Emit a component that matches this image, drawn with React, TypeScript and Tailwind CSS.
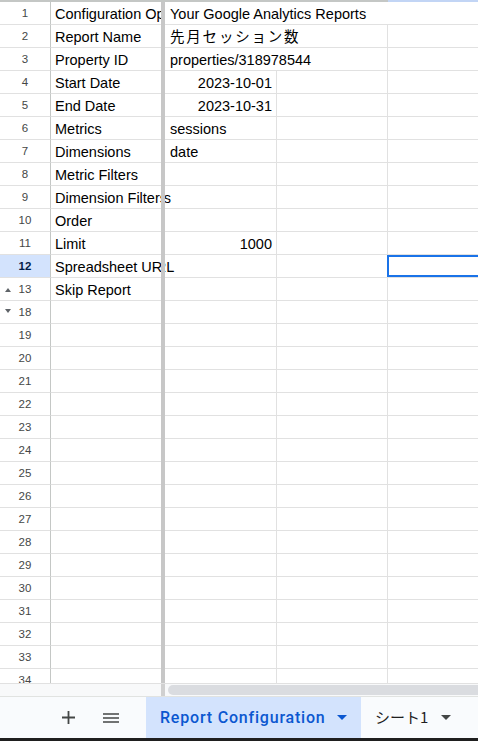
import React from 'react';

type Row = {
  n: number;
  a?: string;
  b?: string;
  bRight?: boolean;
  wide?: boolean; // Japanese text, set a little wider
  spill?: boolean; // A text runs on past the frozen line
  openB?: boolean; // no border after B
  openC?: boolean; // no border after C
  selected?: boolean;
  up?: boolean;
  down?: boolean;
};

const rows: Row[] = [
  { n: 1, a: 'Configuration Options', b: 'Your Google Analytics Reports', openB: true, openC: true },
  { n: 2, a: 'Report Name', b: '先月セッション数', wide: true, openB: true },
  { n: 3, a: 'Property ID', b: 'properties/318978544', openB: true },
  { n: 4, a: 'Start Date', b: '2023-10-01', bRight: true },
  { n: 5, a: 'End Date', b: '2023-10-31', bRight: true },
  { n: 6, a: 'Metrics', b: 'sessions' },
  { n: 7, a: 'Dimensions', b: 'date' },
  { n: 8, a: 'Metric Filters' },
  { n: 9, a: 'Dimension Filters', spill: true },
  { n: 10, a: 'Order' },
  { n: 11, a: 'Limit', b: '1000', bRight: true },
  { n: 12, a: 'Spreadsheet URL', spill: true, selected: true },
  { n: 13, a: 'Skip Report', up: true },
  ...Array.from({ length: 17 }, (_, i) => ({ n: 18 + i, down: i === 0 })),
];

const cellFont = { fontFamily: '"Liberation Sans", Arial, "Noto Sans CJK JP", sans-serif' };

function SheetRow({ r }: { r: Row }) {
  return (
    <div className="flex h-[23px] shrink-0" style={cellFont}>
      {/* row header */}
      <div
        className={`relative w-[51px] shrink-0 flex items-center justify-center border-r border-b border-r-[#c4c7c5] border-b-[#e1e1e1] text-[11.5px] pt-px ${
          r.selected ? 'bg-[#d3e3fd] font-bold text-[#041e49]' : 'text-[#444746]'
        }`}
      >
        {r.up && (
          <svg className="absolute left-[5px] top-[10px]" width="6" height="4" viewBox="0 0 6 4">
            <path d="M0 4 L3 0 L6 4 Z" fill="#5f6368" />
          </svg>
        )}
        {r.down && (
          <svg className="absolute left-[5px] top-[8px]" width="6" height="4" viewBox="0 0 6 4">
            <path d="M0 0 L6 0 L3 4 Z" fill="#5f6368" />
          </svg>
        )}
        {r.n}
      </div>
      {/* column A */}
      <div className="w-[110px] shrink-0 flex items-center pl-[4px] pt-[4px] border-b border-[#e1e1e1] text-[14.5px] text-black whitespace-nowrap overflow-hidden">
        {r.a}
      </div>
      {/* frozen line */}
      <div className="w-[4px] shrink-0 bg-[#c7c7c7]" />
      {/* column B */}
      <div
        className={`w-[112px] shrink-0 flex items-center pt-[4px] border-b border-[#e1e1e1] text-[14.5px] text-black whitespace-nowrap ${
          r.openB ? 'overflow-visible' : 'border-r overflow-hidden'
        } ${r.bRight ? 'justify-end pr-[4px]' : 'pl-[5px]'} ${r.wide ? 'tracking-[1.8px]' : ''}`}
      >
        {r.spill ? <span className="-ml-[111px]">{r.a}</span> : r.b}
      </div>
      {/* column C */}
      <div className={`w-[111px] shrink-0 border-b border-[#e1e1e1] ${r.openC ? '' : 'border-r'}`} />
      {/* column D */}
      <div className="relative flex-1 border-b border-[#e1e1e1]">
        {r.selected && <div className="absolute -left-px top-0 -right-2 h-[22px] border-2 border-[#1a73e8]" />}
      </div>
    </div>
  );
}

function Caret({ color }: { color: string }) {
  return (
    <svg width="10" height="5" viewBox="0 0 10 5">
      <path d="M0 0 L10 0 L5 5 Z" fill={color} />
    </svg>
  );
}

export default function App() {
  return (
    <div className="w-[478px] h-[741px] flex flex-col bg-white overflow-hidden">
      {/* bottom edge of the hidden column headers */}
      <div className="h-[2px] shrink-0 flex">
        <div className="w-[388px] bg-[#c4c7c5]" />
        <div className="flex-1 bg-[#c2d5f5]" />
      </div>

      {/* grid */}
      <div className="h-[681px] shrink-0 flex flex-col overflow-hidden">
        {rows.map((r) => (
          <SheetRow key={r.n} r={r} />
        ))}
      </div>

      {/* horizontal scrollbar */}
      <div className="h-[13px] shrink-0 flex border-t border-[#e1e1e1] bg-[#f8f9fa]">
        <div className="w-[161px] shrink-0" />
        <div className="w-[4px] shrink-0 bg-[#d0d0d0]" />
        <div className="flex-1 flex items-center pl-[3px]">
          <div className="h-[10px] flex-1 rounded-l-full bg-[#dadce0]" />
        </div>
      </div>

      {/* sheet tabs */}
      <div className="h-[42px] shrink-0 flex items-stretch border-t border-[#e1e3e1] bg-[#f9fbfd]">
        <div className="flex items-center pl-[52px] gap-[11px]">
          <button className="w-8 h-8 flex items-center justify-center">
            <svg width="13" height="13" viewBox="0 0 13 13">
              <path d="M6.5 0 V13 M0 6.5 H13" stroke="#444746" strokeWidth="1.8" />
            </svg>
          </button>
          <button className="w-8 h-8 flex items-center justify-center">
            <svg width="16" height="10" viewBox="0 0 16 10">
              <path d="M0 1 H16 M0 5 H16 M0 9 H16" stroke="#444746" strokeWidth="1.7" />
            </svg>
          </button>
        </div>
        <div
          className="ml-[19px] w-[215px] flex items-center justify-between pl-[14px] pr-[14px] bg-[#d3e3fd] text-[#0b57d0] text-[16px] font-medium tracking-[0.8px]"
          style={{ fontFamily: 'Roboto, "Noto Sans", sans-serif' }}
        >
          <span>Report Configuration</span>
          <Caret color="#0b57d0" />
        </div>
        <div
          className="flex items-center gap-[13px] pl-[14px] text-[#1f1f1f] text-[15px]"
          style={{ fontFamily: '"Noto Sans CJK JP", Roboto, sans-serif' }}
        >
          <span>シート1</span>
          <Caret color="#444746" />
        </div>
      </div>

      <div className="h-[3px] shrink-0 bg-[#1f1f1f]" />
    </div>
  );
}
